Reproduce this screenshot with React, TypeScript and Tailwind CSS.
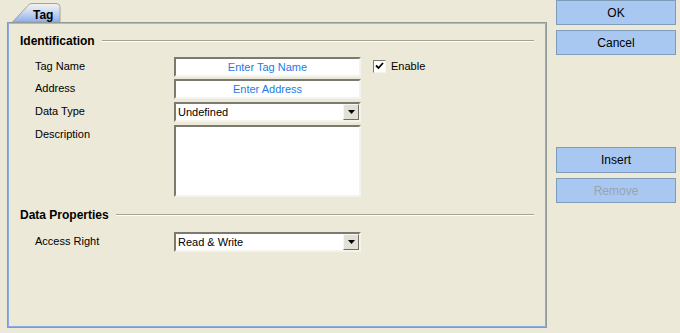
import React from "react";

const FONT = "font-['Liberation_Sans',Arial,sans-serif]";

function SectionHeader({ title }: { title: string }) {
  return (
    <div className="flex h-[16px] items-center pl-[11px] pr-[11px]">
      <span className="text-[12px] font-bold text-black">{title}</span>
      <div className="ml-[7px] flex flex-1 flex-col">
        <div className="h-px bg-[#A5A397]" />
        <div className="h-px bg-white" />
      </div>
    </div>
  );
}

function Field({ label, children, className = "" }: { label: string; children: React.ReactNode; className?: string }) {
  return (
    <div className={`flex items-start pl-[26px] ${className}`}>
      <div className="w-[139px] pt-px text-[11px] text-black">{label}</div>
      {children}
    </div>
  );
}

function TextBox({ placeholder, height = 20 }: { placeholder?: string; height?: number }) {
  return (
    <div
      className="flex w-[187px] items-center justify-center border-2 border-t-[#7B7A6F] border-l-[#7B7A6F] border-r-[#F4F3EE] border-b-[#F4F3EE] bg-white text-[11px] text-[#1E7BE6]"
      style={{ height }}
    >
      {placeholder}
    </div>
  );
}

function Select({ value }: { value: string }) {
  return (
    <div className="flex h-[20px] w-[187px] items-stretch border-2 border-t-[#7B7A6F] border-l-[#7B7A6F] border-r-[#F4F3EE] border-b-[#F4F3EE] bg-white">
      <div className="flex flex-1 items-center pl-[2px] text-[11px] text-black">{value}</div>
      <div className="flex w-[16px] items-center justify-center border border-t-[#F7F6F2] border-l-[#F7F6F2] border-r-[#716F64] border-b-[#716F64] bg-[#E3E0D5]">
        <svg width="7" height="4" viewBox="0 0 7 4">
          <path d="M0 0H7L3.5 4Z" fill="#000" />
        </svg>
      </div>
    </div>
  );
}

function XpButton({ label, disabled, className = "" }: { label: string; disabled?: boolean; className?: string }) {
  return (
    <button
      type="button"
      className={`flex w-[120px] items-center justify-center border border-[#7F9DB9] bg-[#A9C8F1] text-[12px] ${
        disabled ? "text-[#9AA3AE]" : "text-black"
      } ${className}`}
    >
      {label}
    </button>
  );
}

export default function App() {
  return (
    <div className={`flex h-[333px] w-[680px] overflow-hidden bg-[#ECE9D8] ${FONT}`}>
      {/* tab + panel */}
      <div className="ml-[7px] flex w-[540px] flex-col pt-[3px]">
        <div className="relative ml-[5px] h-[19px] w-[49px]">
          <svg className="absolute inset-0" width="49" height="19" viewBox="0 0 49 19">
            <defs>
              <linearGradient id="tabg" x1="0" y1="0" x2="0" y2="1">
                <stop offset="0" stopColor="#F4F3EC" />
                <stop offset="0.35" stopColor="#D7E0F2" />
                <stop offset="1" stopColor="#8FAEEA" />
              </linearGradient>
            </defs>
            <path d="M0.5 19L16 2.5Q17.5 0.5 20 0.5H44Q47.5 0.5 48 3.5V19Z" fill="url(#tabg)" stroke="#A3A59B" />
          </svg>
          <span className="absolute left-[21px] top-[3px] text-[12px] font-bold text-black">Tag</span>
        </div>
        <div className="h-[306px] border border-[#919B9C]">
          <div className="flex h-full flex-col border border-[#8DAAE2] border-t-[#A7B7D6] pt-[9px]">
            <SectionHeader title="Identification" />
            <Field label="Tag Name" className="mt-[8px]">
              <TextBox placeholder="Enter Tag Name" />
              <div className="ml-[12px] mt-px flex items-center">
                <div className="flex h-[13px] w-[13px] items-center justify-center border border-t-[#7B7A6F] border-l-[#7B7A6F] border-r-[#F4F3EE] border-b-[#F4F3EE] bg-white">
                  <svg width="9" height="8" viewBox="0 0 9 8">
                    <path d="M1 3.5L3.5 6L8 1" stroke="#000" strokeWidth="1.8" fill="none" />
                  </svg>
                </div>
                <span className="ml-[5px] text-[11px] text-black">Enable</span>
              </div>
            </Field>
            <Field label="Address" className="mt-[2px]">
              <TextBox placeholder="Enter Address" />
            </Field>
            <Field label="Data Type" className="mt-[3px]">
              <Select value="Undefined" />
            </Field>
            <Field label="Description" className="mt-[3px]">
              <TextBox height={72} />
            </Field>
            <div className="mt-[10px]">
              <SectionHeader title="Data Properties" />
            </div>
            <Field label="Access Right" className="mt-[9px]">
              <Select value="Read & Write" />
            </Field>
          </div>
        </div>
      </div>

      {/* buttons */}
      <div className="ml-[9px] flex flex-col">
        <XpButton label="OK" className="h-[25px]" />
        <XpButton label="Cancel" className="mt-[5px] h-[25px]" />
        <XpButton label="Insert" className="mt-[92px] h-[26px]" />
        <XpButton label="Remove" disabled className="mt-[5px] h-[25px]" />
      </div>
    </div>
  );
}
